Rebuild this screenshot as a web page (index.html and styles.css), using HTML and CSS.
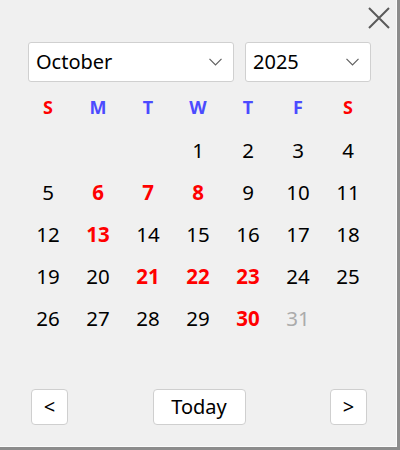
FILE: index.html
```html
<!DOCTYPE html>
<html>
<head>
<meta charset="utf-8">
<link rel="stylesheet" href="styles.css">
</head>
<body>
<div class="window">
  <div class="titlebar">
    <button class="close" aria-label="Close">
      <svg width="22" height="22" viewBox="0 0 22 22"><path d="M1 1 L21 21 M21 1 L1 21" stroke="#5a5a5a" stroke-width="2" fill="none"/></svg>
    </button>
  </div>
  <div class="selects">
    <div class="select month"><span>October</span><svg width="13" height="8" viewBox="0 0 13 8"><polyline points="0.5,0.8 6.5,6.8 12.5,0.8" stroke="#606060" stroke-width="1.2" fill="none"/></svg></div>
    <div class="select year"><span>2025</span><svg width="13" height="8" viewBox="0 0 13 8"><polyline points="0.5,0.8 6.5,6.8 12.5,0.8" stroke="#606060" stroke-width="1.2" fill="none"/></svg></div>
  </div>
  <div class="grid head">
    <div class="sun">S</div><div class="wd">M</div><div class="wd">T</div><div class="wd">W</div><div class="wd">T</div><div class="wd">F</div><div class="sun">S</div>
  </div>
  <div class="grid days">
    <div></div><div></div><div></div><div>1</div><div>2</div><div>3</div><div>4</div>
    <div>5</div><div class="hot">6</div><div class="hot">7</div><div class="hot">8</div><div>9</div><div>10</div><div>11</div>
    <div>12</div><div class="hot">13</div><div>14</div><div>15</div><div>16</div><div>17</div><div>18</div>
    <div>19</div><div>20</div><div class="hot">21</div><div class="hot">22</div><div class="hot">23</div><div>24</div><div>25</div>
    <div>26</div><div>27</div><div>28</div><div>29</div><div class="hot">30</div><div class="dim">31</div><div></div>
  </div>
  <div class="footer">
    <button class="btn nav">&lt;</button>
    <button class="btn today">Today</button>
    <button class="btn nav">&gt;</button>
  </div>
</div>
</body>
</html>
```
FILE: styles.css
```css
html, body {
  margin: 0;
  padding: 0;
}
body {
  background: #f0f0f0;
  font-family: "Noto Sans", "Open Sans", "DejaVu Sans", sans-serif;
  color: #111;
}
.window {
  width: 400px;
  height: 450px;
  box-sizing: border-box;
  background: #f0f0f0;
  border-right: 3px solid #8c8c8c;
  border-bottom: 3px solid #8c8c8c;
  box-shadow: inset -1px -1px 0 #fbfbfb;
  display: flex;
  flex-direction: column;
}
.titlebar {
  height: 42px;
  display: flex;
  justify-content: flex-end;
  align-items: flex-start;
  padding-right: 7px;
  box-sizing: border-box;
}
.close {
  margin: 7px 0 0;
  padding: 0;
  border: 0;
  background: transparent;
  width: 22px;
  height: 22px;
  display: block;
}
.close svg { display: block; }
.selects {
  display: flex;
  gap: 11px;
  padding-left: 28px;
}
.select {
  height: 40px;
  box-sizing: border-box;
  background: #fff;
  border: 1px solid #d0d0d0;
  border-radius: 3px;
  display: flex;
  align-items: center;
  justify-content: space-between;
  padding: 0 11px 0 7px;
  font-size: 20px;
  color: #000;
}
.select span { line-height: 1; }
.month { width: 206px; }
.year { width: 126px; }
.grid {
  display: grid;
  grid-template-columns: repeat(7, 50px);
  padding-left: 23px;
  text-align: center;
}
.head {
  margin-top: 13px;
  height: 24px;
  line-height: 24px;
  font-size: 18px;
  font-weight: 700;
}
.sun { color: #ff0000; }
.wd { color: #4b4bff; }
.days {
  margin-top: 10px;
  grid-auto-rows: 42px;
  line-height: 42px;
  font-size: 20.5px;
  color: #000;
}
.hot { color: #ff0000; font-weight: 700; }
.dim { color: #ababab; }
.footer {
  margin-top: 50px;
  display: flex;
  justify-content: space-between;
  padding: 0 30px 0 31px;
}
.btn {
  height: 36px;
  background: #fff;
  border: 1px solid #cfcfcf;
  border-radius: 4px;
  font-family: inherit;
  font-size: 20px;
  color: #000;
  padding: 0;
  line-height: 1;
}
.nav { width: 37px; }
.today { width: 93px; }
```
